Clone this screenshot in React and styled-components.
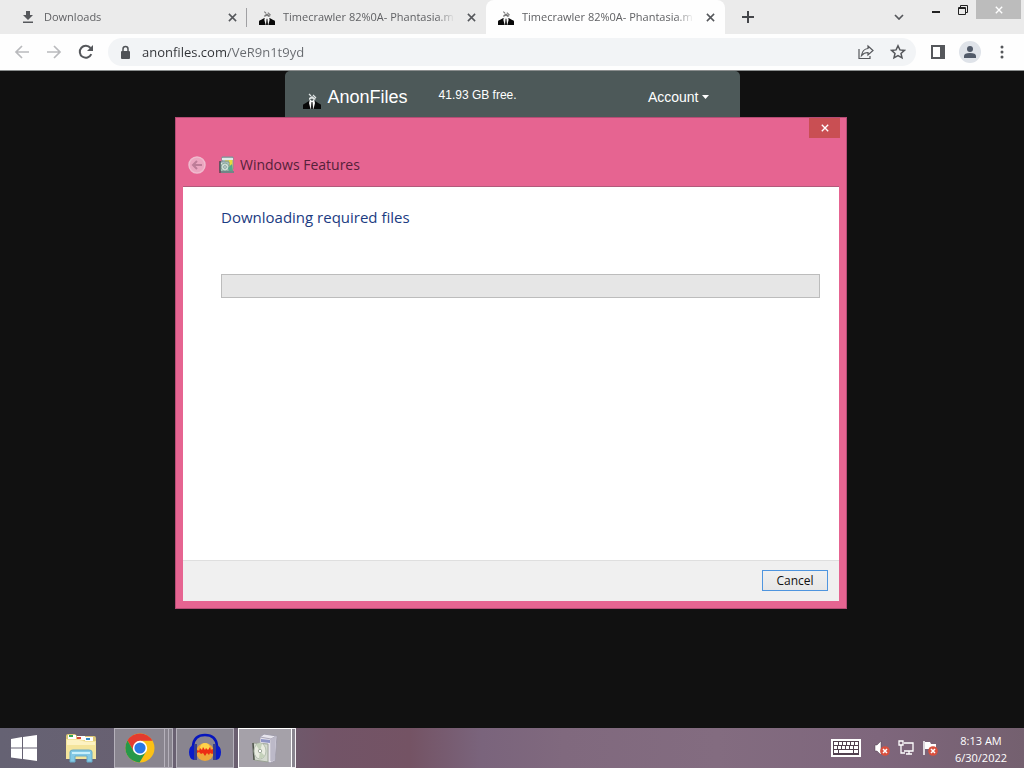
import React from 'react';
import styled, { createGlobalStyle } from 'styled-components';

const GlobalStyle = createGlobalStyle`
  * { box-sizing: border-box; }
  body { margin: 0; font-family: "Open Sans", "Noto Sans", sans-serif; background: #111; }
  button { font: inherit; color: inherit; border: 0; padding: 0; background: none; }
  svg { display: block; flex: none; }
`;

const Desktop = styled.div`
  position: relative;
  display: flex;
  flex-direction: column;
  min-height: 100vh;
`;

const TabStrip = styled.div`
  display: flex;
  height: 34px;
  padding-left: 8px;
  background: #ebebeb;
`;

const Tab = styled.div`
  position: relative;
  flex: 0 1 239px;
  min-width: 0;
  display: flex;
  align-items: center;
  gap: 8px;
  padding: 0 7px 0 12px;
  color: #606164;
  background: ${(p) => (p.$active ? '#fefefe' : 'transparent')};
  border-radius: 8px 8px 0 0;
  &::after {
    content: ${(p) => (p.$divider ? '""' : 'none')};
    position: absolute;
    right: 0;
    top: 8px;
    height: 19px;
    border-right: 1px solid #a0a0a3;
  }
`;

const TabTitle = styled.span`
  flex: 1;
  min-width: 0;
  overflow: hidden;
  white-space: nowrap;
  font-size: 11px;
  line-height: 18px;
  mask-image: linear-gradient(to right, #000 calc(100% - 18px), transparent);
`;

const IconButton = styled.button`
  flex: none;
  display: flex;
  align-items: center;
  justify-content: center;
  width: ${(p) => p.$w || 16}px;
  height: ${(p) => p.$h || 16}px;
  color: ${(p) => p.$color || '#55575b'};
  background: ${(p) => p.$bg || 'transparent'};
`;

const NewTab = styled(IconButton)`
  align-self: center;
  margin-left: 9px;
`;

const WindowControls = styled.div`
  display: flex;
  margin-left: auto;
  padding-right: 3px;
`;

const TabSearch = styled(IconButton)`
  margin-right: 12px;
`;

const Toolbar = styled.div`
  display: flex;
  align-items: center;
  height: 37px;
  padding: 0 6px;
  background: #fefefe;
  border-bottom: 1px solid #8b8e8e;
`;

const Omnibox = styled.label`
  flex: 1;
  min-width: 0;
  display: flex;
  align-items: center;
  height: 28px;
  margin: 0 6px;
  padding: 0 6px 0 10px;
  gap: 8px;
  border-radius: 14px;
  background: #f2f4f6;
`;

const AddressInput = styled.input`
  flex: 1;
  min-width: 0;
  border: 0;
  padding: 0 0 0 1px;
  background: linear-gradient(to right, #303236 88px, #66696e 88px);
  background-clip: text;
  color: transparent;
  font: inherit;
  font-size: 13px;
  line-height: 20px;
  outline: 0;
`;

const Page = styled.main`
  flex: 1;
  background: #111;
`;

const SiteNav = styled.nav`
  display: flex;
  align-items: center;
  max-width: 455px;
  height: 52px;
  margin: 0 auto;
  padding: 0 31px 0 18px;
  border-radius: 5px 5px 0 0;
  background: #4d5959;
  color: #fff;
  font-family: "Liberation Sans", sans-serif;
`;

const Brand = styled.a`
  display: flex;
  align-items: center;
  gap: 7px;
  color: #fff;
  font-size: 18px;
  line-height: 20px;
  text-decoration: none;
`;

const BrandMark = styled.span`
  padding-top: 6px;
`;

const Quota = styled.span`
  margin: 0 auto 4px 31px;
  font-size: 12px;
  line-height: 16px;
`;

const AccountButton = styled.button`
  display: flex;
  align-items: center;
  gap: 3px;
  font-size: 14px;
  line-height: 20px;
`;

const Dialog = styled.section`
  position: absolute;
  inset: 117px 177px 159px 175px;
  display: flex;
  flex-direction: column;
  padding: 0 7px 7px;
  border: 1px solid #b54c75;
  background: #e66491;
`;

const DialogTop = styled.div`
  display: flex;
  justify-content: flex-end;
  height: 28px;
  margin-right: -1px;
`;

const DialogHeader = styled.header`
  display: flex;
  align-items: center;
  height: 40px;
  padding: 0 4px 2px;
  gap: 5px;
  color: #55213a;
`;

const DialogTitle = styled.h1`
  margin: 0;
  font-size: 14px;
  line-height: 20px;
  font-weight: 400;
`;

const BackButton = styled(IconButton)`
  margin-right: 7px;
`;

const DialogBody = styled.div`
  flex: 1;
  padding: 20px 19px 0 38px;
  background: #fff;
  border-top: 1px solid #b15a7b;
`;

const Heading = styled.h2`
  margin: 0 0 47px;
  color: #1b3b82;
  font-size: 15px;
  line-height: 20px;
  font-weight: 400;
`;

const ProgressTrack = styled.div`
  height: 24px;
  border: 1px solid #bcbcbc;
  background: #e6e6e6;
`;

const DialogFooter = styled.footer`
  display: flex;
  align-items: center;
  justify-content: flex-end;
  height: 41px;
  padding: 0 11px 1px;
  border-top: 1px solid #dfdfdf;
  background: #f0f0f0;
`;

const CancelButton = styled.button`
  width: 66px;
  height: 21px;
  border: 1px solid #4f95df;
  background: linear-gradient(#f0f0f0, #e7e7e7);
  color: #111;
  font-size: 12px;
  line-height: 18px;
`;

const Taskbar = styled.footer`
  display: flex;
  align-items: center;
  height: 40px;
  background: linear-gradient(to right, #656273 0, #6b5f70 25%, #725467 32%, #745364 40%, #7a647c 47%, #80697e 55%, #836c80 70%, #7e667c 86%, #74606f 100%);
  color: #fff;
`;

const TaskButton = styled.button`
  display: flex;
  align-items: center;
  justify-content: center;
  width: ${(p) => p.$w}px;
  height: 40px;
  margin-left: ${(p) => p.$gap || 0}px;
  border: ${(p) => (p.$framed ? `1px solid ${p.$active ? '#fff' : '#b5b1bb'}` : '0')};
  background: ${(p) => (p.$active ? '#a5a1a9' : p.$framed ? '#89858f' : 'transparent')};
`;

const StackEdge = styled.span`
  width: 4px;
  height: 40px;
  border: 1px solid ${(p) => (p.$active ? '#f2eff3' : '#b5b1bb')};
  border-left: 0;
  background: #89858f;
`;

const Tray = styled.div`
  display: flex;
  align-items: center;
  margin-left: auto;
  padding-right: 16px;
`;

const TrayButton = styled(IconButton)`
  margin-right: ${(p) => p.$after}px;
`;

const Clock = styled.time`
  width: 54px;
  padding-top: 2px;
  font-size: 11px;
  line-height: 17px;
  text-align: center;
  white-space: nowrap;
`;

const CloseIcon = ({ size = 9, weight = 1.7 }) => (
  <svg width={size} height={size} viewBox="0 0 10 10" fill="none" stroke="currentColor" strokeWidth={weight}>
    <path d="M1 1l8 8M9 1L1 9" />
  </svg>
);

const DownloadIcon = () => (
  <svg width="16" height="16" viewBox="0 0 16 16" fill="#56585c">
    <path d="M6 2h4v4h3l-5 5-5-5h3zM3 12.500h10V14H3z" />
  </svg>
);

const SuitIcon = ({ size = 16, accent = '#777' }) => (
  <svg width={size} height={size} viewBox="0 0 18 18">
    <path d="M0 18v-4q0-1 2-1.500L6 10l3 2 3-2 4 2.500q2 .5 2 1.500v4z" fill="#080808" />
    <path d="M7 8.500l2 1.500 2-1.500 1 3.500-1.500 6h-3L6 12z" fill="#f8f8f8" />
    <path d="M8.500 11h1l.8 7H7.700z" fill="#222" />
    <path d="M6 7l3-2 4 3-2 1-2-1.500L6 9z" fill={accent} />
    <path d="M6 3l2 2M10 4l3 3" stroke={accent} strokeWidth="1.200" />
  </svg>
);

const ArrowIcon = ({ flip }) => (
  <svg width="16" height="16" viewBox="0 0 16 16" fill="none" stroke="currentColor" strokeWidth="1.700">
    <path d={flip ? 'M1 8h13M8 2l6 6-6 6' : 'M15 8H2M8 2L2 8l6 6'} />
  </svg>
);

const ReloadIcon = () => (
  <svg width="16" height="16" viewBox="0 0 16 16">
    <path d="M13.300 10.200A6 6 0 1 1 12.500 4" fill="none" stroke="currentColor" strokeWidth="2" />
    <path d="M15 1v6H9z" fill="currentColor" />
  </svg>
);

const LockIcon = () => (
  <svg width="15" height="15" viewBox="0 0 15 15">
    <rect x="3" y="6" width="9" height="8" rx="1" fill="#505357" />
    <path d="M5 6V4a2.500 2.500 0 0 1 5 0v2" fill="none" stroke="#505357" strokeWidth="1.500" />
  </svg>
);

const ShareIcon = () => (
  <svg width="16" height="16" viewBox="0 0 16 16" fill="none" stroke="currentColor" strokeWidth="1.200">
    <path d="M1 5v9.500h11V12" />
    <path d="M10 2l5 4.500-5 4.500V8.500Q6 8.500 3.500 11.500 4.500 5 10 4.500z" />
  </svg>
);

const StarIcon = () => (
  <svg width="16" height="16" viewBox="0 0 16 16" fill="none" stroke="currentColor" strokeWidth="1.500">
    <path d="M8 1.800l1.900 4.100 4.500.5-3.400 3 1 4.400L8 11.500l-4 2.300 1-4.400-3.400-3 4.500-.5z" />
  </svg>
);

const PanelIcon = () => (
  <svg width="14" height="14" viewBox="0 0 14 14">
    <path d="M1 1h12v12H1z" fill="none" stroke="currentColor" strokeWidth="2" />
    <path d="M9 1h4v12H9z" fill="currentColor" />
  </svg>
);

const ProfileIcon = () => (
  <svg width="22" height="22" viewBox="0 0 22 22">
    <circle cx="11" cy="11" r="11" fill="#dfe3e9" />
    <g fill="#515a69">
      <circle cx="11" cy="8" r="3" />
      <path d="M5 17v-2q0-3 6-3t6 3v2z" />
    </g>
  </svg>
);

const MenuIcon = () => (
  <svg width="4" height="14" viewBox="0 0 4 14" fill="currentColor">
    <circle cx="2" cy="2" r="1.500" /><circle cx="2" cy="7" r="1.500" /><circle cx="2" cy="12" r="1.500" />
  </svg>
);

const FeaturesIcon = () => (
  <svg width="16" height="18" viewBox="0 0 16 18">
    <path d="M3 1h11v12H3z" fill="#a4b8b8" stroke="#7c9297" />
    <path d="M3 3h11" stroke="#e0ece9" strokeWidth="2" />
    <path d="M6 4h8v10H6z" fill="#bdbd7a" />
    <path d="M10 4h3v5h-3z" fill="#e8dc3c" />
    <path d="M1 6h9v9H1z" fill="#d9e3df" stroke="#759497" />
    <circle cx="6" cy="11" r="4" fill="#cbdcd4" stroke="#8aa79b" />
    <circle cx="6" cy="11" r="1.300" fill="#fff" stroke="#7a9793" />
    <path d="M1 5v12" stroke="#222c2d" />
    <path d="M2 16h13" stroke="#728587" strokeWidth="2" />
    <path d="M9 12l4-4 1 7H10z" fill="#59a58b" />
  </svg>
);

const BackCircleIcon = () => (
  <svg width="20" height="20" viewBox="0 0 20 20">
    <circle cx="10" cy="10" r="8" fill="#eba6c0" stroke="#f0bbce" strokeWidth="1.500" />
    <path d="M15 10H6M10 6l-4 4 4 4" fill="none" stroke="#bd7d98" strokeWidth="2" />
  </svg>
);

const WindowsIcon = () => (
  <svg width="26" height="26" viewBox="0 0 26 26" fill="#fff">
    <path d="M0 4l11-2v10.500H0zM12 2l14-2v12.500H12zM0 13.500h11V24L0 22.500zM12 13.500h14V26l-14-2z" />
  </svg>
);

const ExplorerIcon = () => (
  <svg width="32" height="32" viewBox="0 0 32 32">
    <path d="M1 4q0-2 2-2h7l2 2h17q2 0 2 2v21H1z" fill="#dcc878" />
    <path d="M3 3h8v4H3z" fill="#fff" /><path d="M4 3h4v2H4z" fill="#35a653" />
    <path d="M12 4h8v4h-8z" fill="#fff" /><path d="M12 5h4v2h-4z" fill="#d64a36" />
    <path d="M20 5h8v4h-8z" fill="#fff" /><path d="M21 6h4v2h-4z" fill="#318dc5" />
    <path d="M1 7h13l7 2h10v18H1z" fill="#f4e49b" />
    <path d="M2 8h12l7 2h9v3H2z" fill="#fdf2c2" />
    <path d="M5 30V20q0-2 3-2h16q3 0 3 2v10h-5v-6H10v6z" fill="#83c9e5" stroke="#68abc7" />
    <path d="M7 20h18v2H7z" fill="#c9f0fb" />
  </svg>
);

const ChromeIcon = () => (
  <svg width="30" height="30" viewBox="0 0 30 30">
    <circle cx="15" cy="15" r="14.500" fill="#fbc116" />
    <path d="M2.500 7.500A14.500 14.500 0 0 1 27.600 7.800H15L8.800 18.600z" fill="#e33b2e" />
    <path d="M2.500 7.500A14.500 14.500 0 0 0 14.500 29.500l6.700-11L15 22.200 8.800 18.600z" fill="#269849" />
    <circle cx="15" cy="15" r="7.200" fill="#fff" />
    <circle cx="15" cy="15" r="5.600" fill="#2878e5" />
  </svg>
);

const AudacityIcon = () => (
  <svg width="34" height="30" viewBox="0 0 34 30">
    <circle cx="17" cy="19" r="9" fill="#eea83b" />
    <circle cx="17" cy="15" r="5" fill="#ffd24a" />
    <path d="M8 18l2-1 1 1 1-3 2 2 1-3 2 3 1-2 2 2 2-3 1 3 1-1 2 1v3l-2 1-2-1-1 2-2-2-2 3-2-3-2 1-2-2-2 1-2-1z" fill="#ec2d14" />
    <path d="M5 13Q6 2 17 2t12 11" fill="none" stroke="#0716bd" strokeWidth="2.500" />
    <path d="M6 12v15q-5-1-5-8 0-6 5-7zM28 12v15q5-1 5-8 0-6-5-7z" fill="#0a1bc9" />
    <path d="M6 11h3v16H6zM25 11h3v16h-3z" fill="#3a418c" />
  </svg>
);

const InstallerIcon = () => (
  <svg width="28" height="30" viewBox="0 0 28 30">
    <path d="M9 4l4-3 13 2-2 25-5 2-11-4z" fill="#e6e4ec" stroke="#a09dab" />
    <path d="M9 4l11 2 5-3M20 6v22" fill="none" stroke="#aaa6b7" />
    <path d="M20 6l5-3-1 24-4 2z" fill="#bcb9c8" />
    <path d="M10 6l9 1v3l-9-1z" fill="#8e94c4" />
    <path d="M2 10l15 1v18L3 27z" fill="#d3d9ce" stroke="#9ba295" />
    <path d="M2 10l1 17" stroke="#4f544c" strokeWidth="1.500" />
    <ellipse cx="9" cy="18" rx="6" ry="8" fill="#e9ece1" stroke="#b2bcae" />
    <path d="M9 18l-4-6q3-3 6-1zM9 18l5 5q-3 3-6 2z" fill="#c4d1ba" />
    <circle cx="9" cy="18" r="1.700" fill="#fff" stroke="#a3ac9f" />
  </svg>
);

const KeyboardIcon = () => (
  <svg width="30" height="18" viewBox="0 0 30 18">
    <path d="M1 1h28v16H1z" fill="#51404e" stroke="#fff" strokeWidth="2" />
    <path d="M3 3h4v3H3zM8 3h3v3H8zM12 3h3v3h-3zM16 3h3v3h-3zM20 3h3v3h-3zM24 3h3v3h-3zM3 7h3v3H3zM7 7h3v3H7zM11 7h3v3h-3zM15 7h3v3h-3zM19 7h3v3h-3zM23 7h4v3h-4zM3 11h4v3H3zM8 11h14v3H8zM23 11h4v3h-4z" fill="#fff" />
  </svg>
);

const ErrorBadge = () => (
  <>
    <circle cx="11" cy="11" r="4.800" fill="#d9503e" />
    <path d="M9 9l4 4M13 9l-4 4" stroke="#fff" strokeWidth="1.500" />
  </>
);

const VolumeIcon = () => (
  <svg width="16" height="16" viewBox="0 0 16 16">
    <path d="M1 5h2l4-4v14l-4-4H1z" fill="#fff" stroke="#51404e" strokeWidth=".5" />
    <ErrorBadge />
  </svg>
);

const NetworkIcon = () => (
  <svg width="16" height="16" viewBox="0 0 16 16" fill="none" stroke="#fff" strokeWidth="1.300">
    <path d="M6 3h9v8H6M8 14h6M11 11v3M1 1v4h4V1zM3 5v8h4" />
  </svg>
);

const FlagIcon = () => (
  <svg width="16" height="16" viewBox="0 0 16 16">
    <path d="M2 1v14" stroke="#fff" strokeWidth="1.500" />
    <path d="M3 2h5l1 2h5v7H9L8 9H3z" fill="#fff" />
    <ErrorBadge />
  </svg>
);

const tabs = [
  { title: 'Downloads', icon: <DownloadIcon />, divider: true },
  { title: 'Timecrawler 82%0A- Phantasia.m', icon: <SuitIcon /> },
  { title: 'Timecrawler 82%0A- Phantasia.m', icon: <SuitIcon />, active: true },
];

export default function App() {
  return (
    <>
      <GlobalStyle />
      <Desktop>
        <TabStrip>
          {tabs.map((tab, i) => (
            <Tab key={i} $active={tab.active} $divider={tab.divider}>
              {tab.icon}
              <TabTitle>{tab.title}</TabTitle>
              <IconButton aria-label="Close tab"><CloseIcon /></IconButton>
            </Tab>
          ))}
          <NewTab $w={28} $h={28} aria-label="New tab">
            <svg width="12" height="12" viewBox="0 0 12 12" stroke="#44464a" strokeWidth="2"><path d="M6 0v12M0 6h12" /></svg>
          </NewTab>
          <WindowControls>
            <TabSearch $w={24} $h={34} aria-label="Search tabs">
              <svg width="10" height="6" viewBox="0 0 10 6" fill="none" stroke="currentColor" strokeWidth="1.700"><path d="M1 1l4 4 4-4" /></svg>
            </TabSearch>
            <IconButton $w={26} $h={24} aria-label="Minimize">
              <svg width="8" height="2" viewBox="0 0 8 2"><path d="M0 0h8v2H0z" fill="#222" /></svg>
            </IconButton>
            <IconButton $w={27} $h={19} aria-label="Restore">
              <svg width="10" height="10" viewBox="0 0 10 10" fill="none" stroke="#222"><path d="M.5 2.500h7v7h-7zM.5 3.500h7M2.500 2V.5h7v7H8" /></svg>
            </IconButton>
            <IconButton $w={45} $h={19} $bg="#bcbcbc" $color="#fff" aria-label="Close window"><CloseIcon size={8} /></IconButton>
          </WindowControls>
        </TabStrip>
        <Toolbar>
          <IconButton $w={32} $h={28} $color="#b9babd" aria-label="Back"><ArrowIcon /></IconButton>
          <IconButton $w={32} $h={28} $color="#b9babd" aria-label="Forward"><ArrowIcon flip /></IconButton>
          <IconButton $w={32} $h={28} aria-label="Reload"><ReloadIcon /></IconButton>
          <Omnibox>
            <LockIcon />
            <AddressInput aria-label="Address" defaultValue="anonfiles.com/VeR9n1t9yd" />
            <IconButton $w={24} $h={28} aria-label="Share"><ShareIcon /></IconButton>
            <IconButton $w={24} $h={28} aria-label="Bookmark"><StarIcon /></IconButton>
          </Omnibox>
          <IconButton $w={32} $h={28} aria-label="Side panel"><PanelIcon /></IconButton>
          <IconButton $w={32} $h={28} aria-label="Profile"><ProfileIcon /></IconButton>
          <IconButton $w={32} $h={28} aria-label="Menu"><MenuIcon /></IconButton>
        </Toolbar>
        <Page>
          <SiteNav>
            <Brand href="#"><BrandMark><SuitIcon size={18} accent="#dfe4e4" /></BrandMark>AnonFiles</Brand>
            <Quota>41.93 GB free.</Quota>
            <AccountButton>
              Account
              <svg width="7" height="4" viewBox="0 0 7 4"><path d="M0 0h7L3.500 4z" fill="#fff" /></svg>
            </AccountButton>
          </SiteNav>
        </Page>
        <Taskbar>
          <TaskButton $w={48} aria-label="Start"><WindowsIcon /></TaskButton>
          <TaskButton $w={60} $gap={3} aria-label="File Explorer"><ExplorerIcon /></TaskButton>
          <TaskButton $w={51} $gap={3} $framed aria-label="Chrome"><ChromeIcon /></TaskButton>
          <StackEdge /><StackEdge />
          <TaskButton $w={58} $gap={3} $framed aria-label="Audacity"><AudacityIcon /></TaskButton>
          <TaskButton $w={54} $gap={4} $framed $active aria-label="Windows Features"><InstallerIcon /></TaskButton>
          <StackEdge $active />
          <Tray>
            <TrayButton $w={30} $h={18} $after={13} aria-label="Touch keyboard"><KeyboardIcon /></TrayButton>
            <TrayButton $after={8} aria-label="Volume"><VolumeIcon /></TrayButton>
            <TrayButton $after={8} aria-label="Network"><NetworkIcon /></TrayButton>
            <TrayButton $after={16} aria-label="Action center"><FlagIcon /></TrayButton>
            <Clock>8:13 AM<br />6/30/2022</Clock>
          </Tray>
        </Taskbar>
        <Dialog aria-label="Windows Features" role="dialog">
          <DialogTop>
            <IconButton $w={31} $h={20} $bg="#c94f53" $color="#fff" aria-label="Close"><CloseIcon size={8} /></IconButton>
          </DialogTop>
          <DialogHeader>
            <BackButton $w={20} $h={20} aria-label="Back"><BackCircleIcon /></BackButton>
            <FeaturesIcon />
            <DialogTitle>Windows Features</DialogTitle>
          </DialogHeader>
          <DialogBody>
            <Heading>Downloading required files</Heading>
            <ProgressTrack role="progressbar" aria-label="Download progress" />
          </DialogBody>
          <DialogFooter><CancelButton>Cancel</CancelButton></DialogFooter>
        </Dialog>
      </Desktop>
    </>
  );
}
